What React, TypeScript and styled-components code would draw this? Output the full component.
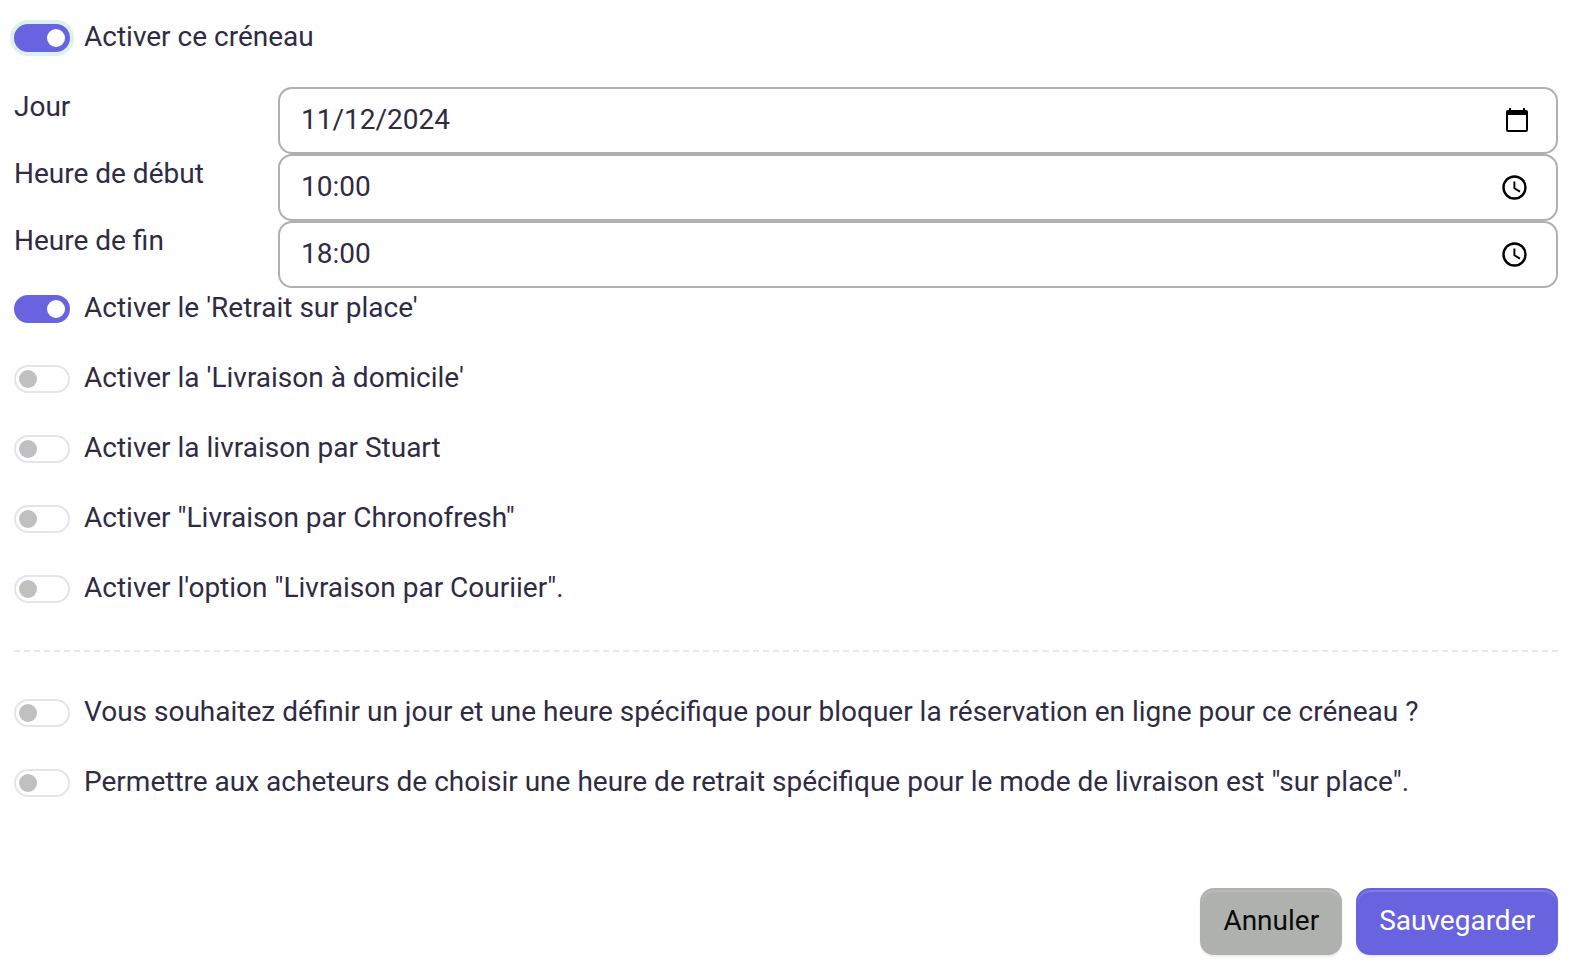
import React, { useId, useState } from 'react';
import styled, { createGlobalStyle } from 'styled-components';

const GlobalStyle = createGlobalStyle`
  *, *::before, *::after { box-sizing: border-box; }
  body {
    margin: 0;
    background: #fff;
    color: #2f2b43;
    font-family: Roboto, "Liberation Sans", sans-serif;
    font-size: 28px;
    line-height: 42px;
  }
`;

const Form = styled.form`
  padding: 16px 16px 18px 14px;
`;

const SwitchRow = styled.div`
  display: flex;
  align-items: flex-start;
  gap: 14px;
  margin-bottom: 28px;
`;

const Switch = styled.input<{ $ring?: boolean }>`
  appearance: none;
  flex: none;
  display: flex;
  align-items: center;
  width: 56px;
  height: 28px;
  margin: 8px 0 0;
  padding: 0 3px;
  border: 2px solid #e5e4ec;
  border-radius: 14px;
  background: #fff;
  cursor: pointer;
  outline: none;
  box-shadow: ${({ $ring }) => ($ring ? '0 0 0 4px #daf1ec' : 'none')};

  &::before {
    content: '';
    width: 18px;
    height: 18px;
    border-radius: 50%;
    background: #c0c0c0;
  }

  &:checked {
    justify-content: flex-end;
    border-color: #6963e0;
    background: #6963e0;
  }

  &:checked::before {
    background: #fff;
  }
`;

const Fields = styled.div`
  margin: 29px 0 -1px;
`;

const Field = styled.div`
  display: grid;
  grid-template-columns: 264px 1fr;
  align-items: start;
`;

const FieldLabel = styled.label`
  margin-top: -1px;
`;

const InputBox = styled.div`
  display: flex;
  align-items: center;
  height: 67px;
  padding: 0 28px 2px 21px;
  border: 2px solid #afb0af;
  border-radius: 14px;
  background: #fff;
`;

const TextInput = styled.input`
  flex: 1;
  min-width: 0;
  height: 42px;
  padding: 0;
  border: 0;
  outline: none;
  background: transparent;
  color: inherit;
  font: inherit;
`;

const PickerButton = styled.button`
  display: flex;
  padding: 0;
  border: 0;
  background: transparent;
  color: #000;
  cursor: pointer;
`;

const Divider = styled.hr`
  height: 0;
  margin: 41px 0 39px;
  border: 0;
  border-top: 2px dashed #e9e9e9;
`;

const Actions = styled.div`
  display: flex;
  justify-content: flex-end;
  gap: 14px;
  margin-top: 85px;
`;

const Button = styled.button<{ $primary?: boolean }>`
  height: 67px;
  padding: 0 21px 2px;
  border: 2px solid ${({ $primary }) => ($primary ? '#6963e0' : '#afb1ae')};
  border-radius: 14px;
  background: ${({ $primary }) => ($primary ? '#6963e0' : '#afb1ae')};
  color: ${({ $primary }) => ($primary ? '#fff' : '#0b0b0b')};
  font: inherit;
  box-shadow: inset 0 2px 0 rgba(255, 255, 255, 0.15), 0 2px 2px rgba(0, 0, 0, 0.08);
  cursor: pointer;
`;

const CalendarIcon = () => (
  <svg width="24" height="26" viewBox="1 0 24 26" aria-hidden="true">
    <path
      fill="currentColor"
      fillRule="evenodd"
      d="M6 1h2v2h12V1h2v2h1a2 2 0 0 1 2 2v18a2 2 0 0 1-2 2H5a2 2 0 0 1-2-2V5a2 2 0 0 1 2-2h1zM5 8v15h18V8z"
    />
  </svg>
);

const ClockIcon = () => (
  <svg width="26" height="26" viewBox="0 0 26 26" fill="none" stroke="currentColor" aria-hidden="true">
    <circle cx="12.5" cy="13.5" r="11" strokeWidth="2.4" />
    <path d="M12.4 7.5v6.8l5.6 3.3" strokeWidth="1.9" />
  </svg>
);

interface SwitchFieldProps {
  label: string;
  checked?: boolean;
  ring?: boolean;
}

const SwitchField = ({ label, checked = false, ring }: SwitchFieldProps) => {
  const id = useId();
  const [on, setOn] = useState(checked);
  return (
    <SwitchRow>
      <Switch id={id} type="checkbox" $ring={ring} checked={on} onChange={(e) => setOn(e.target.checked)} />
      <label htmlFor={id}>{label}</label>
    </SwitchRow>
  );
};

interface PickerFieldProps {
  label: string;
  value: string;
  kind: 'date' | 'time';
}

const PickerField = ({ label, value, kind }: PickerFieldProps) => {
  const id = useId();
  return (
    <Field>
      <FieldLabel htmlFor={id}>{label}</FieldLabel>
      <InputBox>
        <TextInput id={id} type="text" defaultValue={value} />
        <PickerButton type="button" aria-label={kind === 'date' ? 'Choisir une date' : 'Choisir une heure'}>
          {kind === 'date' ? <CalendarIcon /> : <ClockIcon />}
        </PickerButton>
      </InputBox>
    </Field>
  );
};

export default function App() {
  return (
    <>
      <GlobalStyle />
      <Form onSubmit={(e) => e.preventDefault()}>
        <SwitchField label="Activer ce créneau" checked ring />
        <Fields>
          <PickerField label="Jour" value="11/12/2024" kind="date" />
          <PickerField label="Heure de début" value="10:00" kind="time" />
          <PickerField label="Heure de fin" value="18:00" kind="time" />
        </Fields>
        <SwitchField label="Activer le 'Retrait sur place'" checked />
        <SwitchField label="Activer la 'Livraison à domicile'" />
        <SwitchField label="Activer la livraison par Stuart" />
        <SwitchField label={'Activer "Livraison par Chronofresh"'} />
        <SwitchField label={'Activer l\'option "Livraison par Couriier".'} />
        <Divider />
        <SwitchField label="Vous souhaitez définir un jour et une heure spécifique pour bloquer la réservation en ligne pour ce créneau ?" />
        <SwitchField label={'Permettre aux acheteurs de choisir une heure de retrait spécifique pour le mode de livraison est "sur place".'} />
        <Actions>
          <Button type="button">Annuler</Button>
          <Button type="submit" $primary>Sauvegarder</Button>
        </Actions>
      </Form>
    </>
  );
}
